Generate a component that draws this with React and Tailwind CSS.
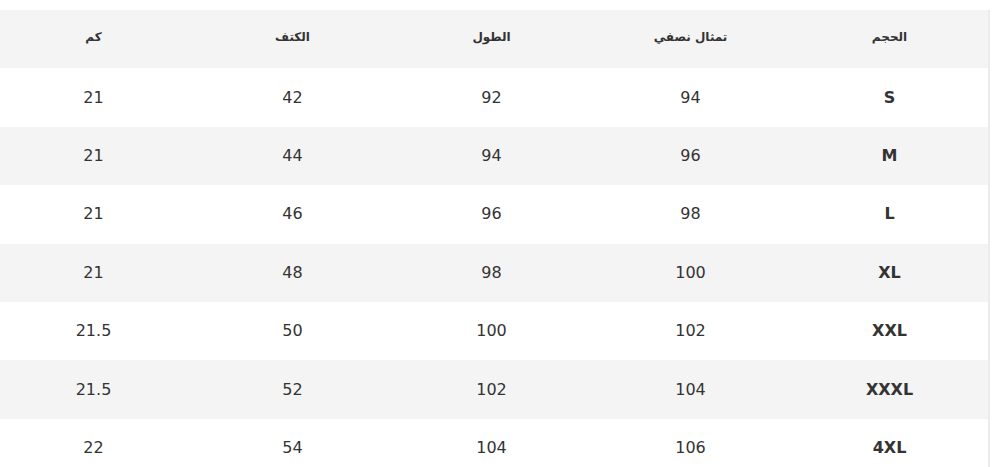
import React from "react";

const headers = ["الحجم", "تمثال نصفي", "الطول", "الكتف", "كم"];
const rows = [
  ["S", "94", "92", "42", "21"],
  ["M", "96", "94", "44", "21"],
  ["L", "98", "96", "46", "21"],
  ["XL", "100", "98", "48", "21"],
  ["XXL", "102", "100", "50", "21.5"],
  ["XXXL", "104", "102", "52", "21.5"],
  ["4XL", "106", "104", "54", "22"],
];

export default function App() {
  return (
    <div className="w-[1000px] h-[467px] overflow-hidden bg-white pt-[10px]" style={{ fontFamily: '"DejaVu Sans", sans-serif' }}>
      <div className="flex">
        <div className="w-[988px] overflow-hidden" dir="rtl">
          <div className="grid grid-cols-[repeat(5,199px)] w-[995px] h-[58.4px] items-center bg-[#f4f4f4] text-[12px] font-bold text-[#333]">
            {headers.map((h, i) => (
              <div key={i} className="text-center pb-[4px] pl-[2px]">{h}</div>
            ))}
          </div>
          {rows.map((r, ri) => (
            <div
              key={ri}
              className={
                "grid grid-cols-[repeat(5,199px)] w-[995px] h-[58.4px] items-center text-[16px] text-[#333] " +
                (ri % 2 === 1 ? "bg-[#f4f4f4]" : "bg-white")
              }
            >
              {r.map((c, ci) => (
                <div key={ci} className={"text-center pl-[2px] " + (ci === 0 ? "font-bold" : "")} dir="ltr">
                  {c}
                </div>
              ))}
            </div>
          ))}
        </div>
        <div className="w-[2px] self-stretch bg-[#ececec]" />
      </div>
    </div>
  );
}
